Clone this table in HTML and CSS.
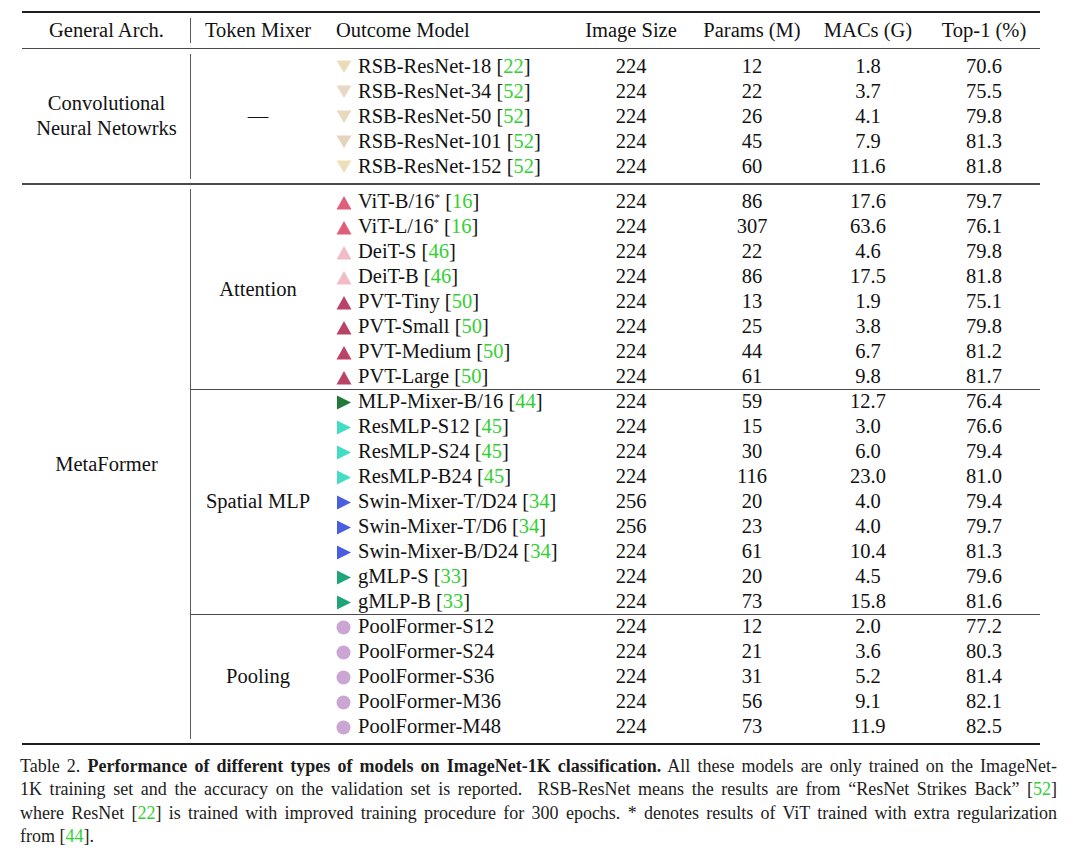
FILE: index.html
```html
<!DOCTYPE html>
<html>
<head>
<meta charset="utf-8">
<link rel="stylesheet" href="styles.css">
</head>
<body>
<div class="page">
<table class="results">
  <colgroup>
    <col class="c-arch"><col class="c-mixer"><col class="c-model"><col class="c-size"><col class="c-params"><col class="c-macs"><col class="c-top1">
  </colgroup>
  <tr class="rule-row"><td colspan="7"><div class="rule thick top"></div></td></tr>
  <tr class="head">
    <th class="arch vline">General Arch.</th>
    <th class="mixer">Token Mixer</th>
    <th class="model">Outcome Model</th>
    <th>Image Size</th>
    <th>Params (M)</th>
    <th>MACs (G)</th>
    <th>Top-1 (%)</th>
  </tr>
  <tr class="rule-row"><td colspan="7"><div class="rule mid"></div></td></tr>

  <tr>
    <td class="arch vline" rowspan="5">Convolutional<br>Neural Netowrks</td>
    <td class="mixer" rowspan="5">—</td>
    <td class="model"><svg class="mk" viewBox="0 0 16 15"><polygon points="0.5,1.5 15.5,1.5 8,14" fill="#eadcb6"/></svg>RSB-ResNet-18 [<span class="cite">22</span>]</td>
    <td>224</td><td>12</td><td>1.8</td><td>70.6</td>
  </tr>
  <tr>
    <td class="model"><svg class="mk" viewBox="0 0 16 15"><polygon points="0.5,1.5 15.5,1.5 8,14" fill="#e8d8c6"/></svg>RSB-ResNet-34 [<span class="cite">52</span>]</td>
    <td>224</td><td>22</td><td>3.7</td><td>75.5</td>
  </tr>
  <tr>
    <td class="model"><svg class="mk" viewBox="0 0 16 15"><polygon points="0.5,1.5 15.5,1.5 8,14" fill="#e8dabf"/></svg>RSB-ResNet-50 [<span class="cite">52</span>]</td>
    <td>224</td><td>26</td><td>4.1</td><td>79.8</td>
  </tr>
  <tr>
    <td class="model"><svg class="mk" viewBox="0 0 16 15"><polygon points="0.5,1.5 15.5,1.5 8,14" fill="#e5d3ba"/></svg>RSB-ResNet-101 [<span class="cite">52</span>]</td>
    <td>224</td><td>45</td><td>7.9</td><td>81.3</td>
  </tr>
  <tr>
    <td class="model"><svg class="mk" viewBox="0 0 16 15"><polygon points="0.5,1.5 15.5,1.5 8,14" fill="#ece0b9"/></svg>RSB-ResNet-152 [<span class="cite">52</span>]</td>
    <td>224</td><td>60</td><td>11.6</td><td>81.8</td>
  </tr>

  <tr class="rule-row"><td colspan="7"><div class="rule mid"></div></td></tr>

  <tr>
    <td class="arch vline" rowspan="22">MetaFormer</td>
    <td class="mixer" rowspan="8">Attention</td>
    <td class="model"><svg class="mk" viewBox="0 0 16 15"><polygon points="8,1 15.5,14.5 0.5,14.5" fill="#de5f79"/></svg>ViT-B/16<sup>*</sup> [<span class="cite">16</span>]</td>
    <td>224</td><td>86</td><td>17.6</td><td>79.7</td>
  </tr>
  <tr>
    <td class="model"><svg class="mk" viewBox="0 0 16 15"><polygon points="8,1 15.5,14.5 0.5,14.5" fill="#de5f79"/></svg>ViT-L/16<sup>*</sup> [<span class="cite">16</span>]</td>
    <td>224</td><td>307</td><td>63.6</td><td>76.1</td>
  </tr>
  <tr>
    <td class="model"><svg class="mk" viewBox="0 0 16 15"><polygon points="8,1 15.5,14.5 0.5,14.5" fill="#f1bcc7"/></svg>DeiT-S [<span class="cite">46</span>]</td>
    <td>224</td><td>22</td><td>4.6</td><td>79.8</td>
  </tr>
  <tr>
    <td class="model"><svg class="mk" viewBox="0 0 16 15"><polygon points="8,1 15.5,14.5 0.5,14.5" fill="#f1bcc7"/></svg>DeiT-B [<span class="cite">46</span>]</td>
    <td>224</td><td>86</td><td>17.5</td><td>81.8</td>
  </tr>
  <tr>
    <td class="model"><svg class="mk" viewBox="0 0 16 15"><polygon points="8,1 15.5,14.5 0.5,14.5" fill="#b94468"/></svg>PVT-Tiny [<span class="cite">50</span>]</td>
    <td>224</td><td>13</td><td>1.9</td><td>75.1</td>
  </tr>
  <tr>
    <td class="model"><svg class="mk" viewBox="0 0 16 15"><polygon points="8,1 15.5,14.5 0.5,14.5" fill="#b94468"/></svg>PVT-Small [<span class="cite">50</span>]</td>
    <td>224</td><td>25</td><td>3.8</td><td>79.8</td>
  </tr>
  <tr>
    <td class="model"><svg class="mk" viewBox="0 0 16 15"><polygon points="8,1 15.5,14.5 0.5,14.5" fill="#b94468"/></svg>PVT-Medium [<span class="cite">50</span>]</td>
    <td>224</td><td>44</td><td>6.7</td><td>81.2</td>
  </tr>
  <tr>
    <td class="model"><svg class="mk" viewBox="0 0 16 15"><polygon points="8,1 15.5,14.5 0.5,14.5" fill="#b94468"/></svg>PVT-Large [<span class="cite">50</span>]</td>
    <td>224</td><td>61</td><td>9.8</td><td>81.7</td>
  </tr>

  <tr class="cline">
    <td class="mixer" rowspan="9">Spatial MLP</td>
    <td class="model"><svg class="mk" viewBox="0 0 16 15"><polygon points="1,0.5 15,7.5 1,14.5" fill="#1f7a3c"/></svg>MLP-Mixer-B/16 [<span class="cite">44</span>]</td>
    <td>224</td><td>59</td><td>12.7</td><td>76.4</td>
  </tr>
  <tr>
    <td class="model"><svg class="mk" viewBox="0 0 16 15"><polygon points="1,0.5 15,7.5 1,14.5" fill="#45dcc6"/></svg>ResMLP-S12 [<span class="cite">45</span>]</td>
    <td>224</td><td>15</td><td>3.0</td><td>76.6</td>
  </tr>
  <tr>
    <td class="model"><svg class="mk" viewBox="0 0 16 15"><polygon points="1,0.5 15,7.5 1,14.5" fill="#45dcc6"/></svg>ResMLP-S24 [<span class="cite">45</span>]</td>
    <td>224</td><td>30</td><td>6.0</td><td>79.4</td>
  </tr>
  <tr>
    <td class="model"><svg class="mk" viewBox="0 0 16 15"><polygon points="1,0.5 15,7.5 1,14.5" fill="#45dcc6"/></svg>ResMLP-B24 [<span class="cite">45</span>]</td>
    <td>224</td><td>116</td><td>23.0</td><td>81.0</td>
  </tr>
  <tr>
    <td class="model"><svg class="mk" viewBox="0 0 16 15"><polygon points="1,0.5 15,7.5 1,14.5" fill="#4a5fe0"/></svg>Swin-Mixer-T/D24 [<span class="cite">34</span>]</td>
    <td>256</td><td>20</td><td>4.0</td><td>79.4</td>
  </tr>
  <tr>
    <td class="model"><svg class="mk" viewBox="0 0 16 15"><polygon points="1,0.5 15,7.5 1,14.5" fill="#4a5fe0"/></svg>Swin-Mixer-T/D6 [<span class="cite">34</span>]</td>
    <td>256</td><td>23</td><td>4.0</td><td>79.7</td>
  </tr>
  <tr>
    <td class="model"><svg class="mk" viewBox="0 0 16 15"><polygon points="1,0.5 15,7.5 1,14.5" fill="#4a5fe0"/></svg>Swin-Mixer-B/D24 [<span class="cite">34</span>]</td>
    <td>224</td><td>61</td><td>10.4</td><td>81.3</td>
  </tr>
  <tr>
    <td class="model"><svg class="mk" viewBox="0 0 16 15"><polygon points="1,0.5 15,7.5 1,14.5" fill="#1ea57a"/></svg>gMLP-S [<span class="cite">33</span>]</td>
    <td>224</td><td>20</td><td>4.5</td><td>79.6</td>
  </tr>
  <tr>
    <td class="model"><svg class="mk" viewBox="0 0 16 15"><polygon points="1,0.5 15,7.5 1,14.5" fill="#1ea57a"/></svg>gMLP-B [<span class="cite">33</span>]</td>
    <td>224</td><td>73</td><td>15.8</td><td>81.6</td>
  </tr>

  <tr class="cline">
    <td class="mixer" rowspan="5">Pooling</td>
    <td class="model"><svg class="mk" viewBox="0 0 16 15"><circle cx="7.5" cy="7.5" r="7" fill="#cba6d4"/></svg>PoolFormer-S12</td>
    <td>224</td><td>12</td><td>2.0</td><td>77.2</td>
  </tr>
  <tr>
    <td class="model"><svg class="mk" viewBox="0 0 16 15"><circle cx="7.5" cy="7.5" r="7" fill="#cba6d4"/></svg>PoolFormer-S24</td>
    <td>224</td><td>21</td><td>3.6</td><td>80.3</td>
  </tr>
  <tr>
    <td class="model"><svg class="mk" viewBox="0 0 16 15"><circle cx="7.5" cy="7.5" r="7" fill="#cba6d4"/></svg>PoolFormer-S36</td>
    <td>224</td><td>31</td><td>5.2</td><td>81.4</td>
  </tr>
  <tr>
    <td class="model"><svg class="mk" viewBox="0 0 16 15"><circle cx="7.5" cy="7.5" r="7" fill="#cba6d4"/></svg>PoolFormer-M36</td>
    <td>224</td><td>56</td><td>9.1</td><td>82.1</td>
  </tr>
  <tr>
    <td class="model"><svg class="mk" viewBox="0 0 16 15"><circle cx="7.5" cy="7.5" r="7" fill="#cba6d4"/></svg>PoolFormer-M48</td>
    <td>224</td><td>73</td><td>11.9</td><td>82.5</td>
  </tr>

  <tr class="rule-row"><td colspan="7"><div class="rule thick bottom"></div></td></tr>
</table>

<div class="caption">
  <span class="line">Table 2. <b>Performance of different types of models on ImageNet-1K classification.</b> All these models are only trained on the ImageNet-</span>
  <span class="line">1K training set and the accuracy on the validation set is reported. &nbsp;RSB-ResNet means the results are from “ResNet Strikes Back” [<span class="cite">52</span>]</span>
  <span class="line">where ResNet [<span class="cite">22</span>] is trained with improved training procedure for 300 epochs. * denotes results of ViT trained with extra regularization</span>
  <span class="line last">from [<span class="cite">44</span>].</span>
</div>
</div>
</body>
</html>
```

FILE: styles.css
```css
html, body {
  margin: 0;
  padding: 0;
  background: #ffffff;
}

.page {
  padding: 11px 0 0 22px;
  font-family: "Liberation Serif", "Times New Roman", serif;
  color: #121212;
}

.results {
  width: 1018px;
  table-layout: fixed;
  border-collapse: separate;
  border-spacing: 0;
  font-size: 20.5px;
}

.c-arch { width: 169px; }
.c-mixer { width: 134px; }
.c-model { width: 241px; }
.c-size { width: 130px; }
.c-params { width: 112px; }
.c-macs { width: 120px; }
.c-top1 { width: 112px; }

.results th,
.results td {
  height: 25px;
  padding: 0;
  line-height: 25px;
  text-align: center;
  font-weight: normal;
  white-space: nowrap;
  vertical-align: middle;
}

.results .model {
  text-align: left;
  padding-left: 11px;
}

.vline {
  box-shadow: inset -1px 0 0 #5a5a5a;
}

.rule-row td {
  height: auto;
  line-height: 0;
  padding: 0;
}

.rule {
  background: #3a3a3a;
}

.rule.thick {
  height: 2px;
  background: #1e1e1e;
}

.rule.top {
  margin-bottom: 5px;
}

.rule.mid {
  height: 1.5px;
  margin: 4.5px 0 4.5px;
  background: #4a4a4a;
}

.rule.bottom {
  margin-top: 4px;
}

.cline td {
  box-shadow: inset 0 1px 0 #4a4a4a;
}

.mk {
  width: 16px;
  height: 15px;
  margin-right: 6px;
  vertical-align: -1.5px;
}

sup {
  font-size: 11px;
  line-height: 0;
  vertical-align: 7px;
}

.cite {
  color: #35cf35;
}

.caption {
  width: 1037px;
  margin: 10px 0 0 -2px;
  font-size: 18px;
  line-height: 23.4px;
  color: #1c1c1c;
}

.caption .line {
  display: block;
  text-align: justify;
  text-align-last: justify;
  white-space: nowrap;
}

.caption .line.last {
  text-align-last: left;
}

.caption b {
  font-weight: bold;
}
```
